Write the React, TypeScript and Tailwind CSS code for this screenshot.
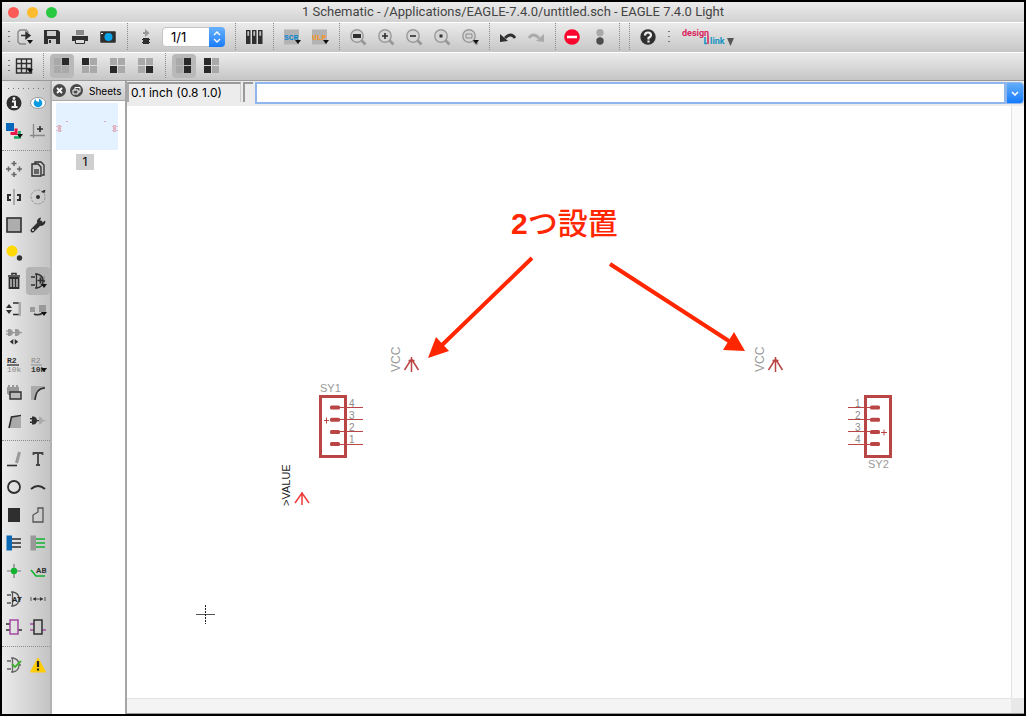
import type { ReactNode } from "react";

const D = "#2f2f2f";
const G = "#9c9c9c";
const GREEN = "#12b32f";
const WIRE = "#b94545";

function Icon({ children }: { children: ReactNode }) {
  return (
    <svg width="18" height="18" viewBox="0 0 18 18" fill="none" className="shrink-0 overflow-visible" aria-hidden="true">
      {children}
    </svg>
  );
}

const drop = <path d="M12 12h6l-3 4z" fill="#111" />;

function Tool({ label, pressed, children }: { label: string; pressed?: boolean; children: ReactNode }) {
  return (
    <button type="button" aria-label={label} aria-pressed={pressed} className="flex h-7 w-7 shrink-0 items-center justify-center">
      <span className={pressed ? "flex h-6 w-6 items-center justify-center rounded-sm bg-[#b9b9b9]" : "flex h-6 w-6 items-center justify-center"}>
        <Icon>{children}</Icon>
      </span>
    </button>
  );
}

function Sep() {
  return (
    <div className="flex w-[10px] shrink-0 justify-center self-stretch">
      <div className="border-l border-dotted border-[#8a8a8a]" />
    </div>
  );
}

function Handle() {
  return (
    <div className="flex w-2 shrink-0 flex-col items-end gap-1">
      <i className="h-px w-0.5 bg-[#777]" />
      <i className="h-px w-0.5 bg-[#777]" />
      <i className="h-px w-0.5 bg-[#777]" />
    </div>
  );
}

function Lens({ children }: { children?: ReactNode }) {
  return (
    <>
      <path d="M12.5 12.5l4 4" stroke="#999" strokeWidth="3" />
      <circle cx="8" cy="8" r="6.2" stroke="#999" strokeWidth="1.4" fill="#d6d6d6" />
      {children}
    </>
  );
}

function Layers({ dark }: { dark: number[] }) {
  const cells = [
    [1, 1],
    [9, 1],
    [1, 9],
    [9, 9],
  ];
  return (
    <>
      {cells.map(([x, y], i) => (
        <rect key={i} x={x} y={y} width="7" height="7" fill={dark.includes(i) ? "#292929" : "#a9a9a9"} />
      ))}
    </>
  );
}

const Gate = ({ color = D }: { color?: string }) => (
  <path d="M2 5h4M2 13h4M6 2h2c5 1 6 5 6 7s-1 6-6 7H6M7.5 2v14M14 9h2" stroke={color} strokeWidth="1.3" />
);

const groupA: [string, ReactNode][] = [
  ["Info", <><circle cx="9" cy="9" r="7.500" fill={D} /><path d="M7 7.500h3v5.500M6.500 13h6" stroke="#eee" strokeWidth="2" /><circle cx="9" cy="4.500" r="1.400" fill="#eee" /></>],
  ["Show", <><ellipse cx="9" cy="9" rx="7.500" ry="5.500" fill="#fff" stroke="#999" /><circle cx="9" cy="9" r="4.300" fill="#0a9be0" /><path d="M7 4.500l3 0v3.500l-3-1z" fill="#fff" /></>],
  ["Display layers", <><path d="M9 15.500h5.500V9" stroke="#12a860" strokeWidth="2.600" /><path d="M5.500 11.500h5.500V6.500" stroke="#e5174c" strokeWidth="3" /><path d="M1 1h8v8H1z" fill="#0968b9" />{drop}</>],
  ["Mark", <><path d="M4.500 2v14M1 13.500h15" stroke="#888" strokeWidth="1.300" /><path d="M11 4v6M8 7h6" stroke={D} strokeWidth="1.600" /></>],
];

const groupB: [string, ReactNode][] = [
  ["Move", <path d="M9 1v5M9 12v5M1 9h5M12 9h5M6.500 3.500h5M6.500 14.500h5M3.500 6.500v5M14.500 6.500v5" stroke="#666" strokeWidth="1.500" />],
  ["Copy", <><path d="M6 4V2h6l3 3v10h-2" stroke={D} strokeWidth="1.300" /><path d="M3 4h6l3 3v9H3z" stroke={D} strokeWidth="1.400" fill="#ccc" /><path d="M5 9h5v5H5z" fill="#666" /></>],
  ["Mirror", <><path d="M9 1v16" stroke="#777" /><path d="M2 6h4v2H4v3h2v2H2zM16 6h-4v2h2v3h-2v2h4z" fill={D} /></>],
  ["Rotate", <><circle cx="9" cy="9" r="7" stroke="#999" strokeDasharray="3 1" /><circle cx="9" cy="9" r="2" fill={D} /><path d="M12 4l3-2 1.500 0-1 3z" fill={D} /></>],
  ["Group", <rect x="2" y="2" width="14" height="14" fill="#adadad" stroke={D} strokeWidth="1.600" />],
  ["Change", <><path d="M3.500 14.500l8-8" stroke={D} strokeWidth="4" strokeLinecap="round" /><path d="M16.200 4.500A4.200 4.200 0 1 1 12 1.500l-1 3.200 2 2z" fill={D} /><circle cx="4" cy="14" r="1" fill="#eee" /></>],
  ["Paste", <><circle cx="7" cy="7" r="5.500" fill="#ffd900" /><circle cx="14.500" cy="14" r="2.700" fill="#333" /></>],
  ["", null],
  ["Delete", <><path d="M7 3V1.500h4V3M3 4h12" stroke={D} strokeWidth="1.500" /><path d="M4.500 6h9v10h-9zM7.500 7v8M10.500 7v8" stroke={D} strokeWidth="1.800" /></>],
  ["Add", <><path d="M10 4h6v9h-6z" fill="#999" /><Gate /><path d="M11.500 5.500v6M8.500 8.500h6" stroke={D} strokeWidth="1.600" />{drop}</>],
  ["Pinswap", <><path d="M8 3h6M8 14.500h6" stroke={D} strokeWidth="1.400" /><path d="M13.500 2h2.500v14h-2.500z" fill="#aaa" /><path d="M1 8l3-4 3 4zM1 10h6l-3 4z" fill={D} /></>],
  ["Replace", <><path d="M1 7h5v5H1zM10 5h7v7h-7z" fill="#999" /><path d="M5 14q4 2 9-1" stroke={D} strokeWidth="1.500" />{drop}</>],
  ["Gateswap", <><path d="M3 1h2q3 1 3 3.500T5 8H3zM10 1h2q3 1 3 3.500T12 8h-2zM1 2.500h3v1.200H1zM1 5.500h3v1.200H1zM8 4h2v1.200H8zM15 4h2v1.200h-2z" fill="#999" /><path d="M8.300 11v5.500l-3.500-2.700zM9.700 11v5.500l3.500-2.700z" fill={D} /></>],
  ["", null],
  ["Name", <><text x="2" y="7" fontSize="8" fontWeight="bold" fontFamily="Liberation Mono, monospace" fill={D}>R2</text><path d="M2 9h12" stroke={D} strokeWidth="1.300" /><text x="2" y="16" fontSize="8" fontFamily="Liberation Mono, monospace" fill="#888">10k</text></>],
  ["Value", <><text x="2" y="7" fontSize="8" fontFamily="Liberation Mono, monospace" fill="#888">R2</text><path d="M2 9h11" stroke={G} strokeWidth="1.300" /><text x="2" y="16" fontSize="8" fontWeight="bold" fontFamily="Liberation Mono, monospace" fill={D}>10k</text>{drop}</>],
  ["Smash", <><path d="M2 3h12v7H2z" fill="#999" /><path d="M4 1v10M8 1v10M12 1v4" stroke="#999" strokeWidth="2" /><path d="M5 8h11v7H5z" stroke={D} strokeWidth="1.400" fill="#bbb" /></>],
  ["Miter", <><path d="M2 2h14v2Q7 5 6 16H2z" fill="#aaa" /><path d="M16 4Q7 4 6 16" stroke={D} strokeWidth="1.600" /></>],
  ["Split", <><path d="M6 5h10v11H4z" fill="#aaa" /><path d="M4 16L6.500 5 16 3.500" stroke={D} strokeWidth="1.600" /></>],
  ["Invoke", <><path d="M3 4.500h2q3 1 3 4t-3 4H3zM1 6h3v1.500H1zM1 9.500h3V11H1zM8 8h2v1.200H8z" fill={D} /><path d="M10 4.500q4 1 4 4t-4 4zM14 8h2.500v1.200H14z" fill="#aaa" /></>],
];

const groupC: [string, ReactNode][] = [
  ["Wire", <><path d="M2 15.500h10" stroke={D} strokeWidth="1.600" /><path d="M11.500 13l3-11" stroke="#999" strokeWidth="3" /></>],
  ["Text", <path d="M4.500 5V3h9v2M9 3v12M7 15h4" stroke="#444" strokeWidth="1.800" />],
  ["Circle", <circle cx="9" cy="9" r="6" stroke={D} strokeWidth="1.800" />],
  ["Arc", <path d="M2 11q7-6 14 0" stroke={D} strokeWidth="2" />],
  ["Rectangle", <path d="M3 2h12v14H3z" fill={D} />],
  ["Polygon", <path d="M4 16V9l5-3V2h5v14z" stroke="#555" strokeWidth="1.300" />],
  ["Bus", <><path d="M1.500 1.500H7v15H1.500z" fill="#0a68b5" /><path d="M7 5h9M7 9h9M7 13h9" stroke={D} strokeWidth="1.400" /></>],
  ["Net", <><path d="M1.500 1.500H7v15H1.500z" fill="#999" /><path d="M7 5h9M7 9h9M7 13h9" stroke={GREEN} strokeWidth="1.600" /></>],
  ["Junction", <><path d="M9 2v14M2 9h14" stroke="#777" strokeWidth="1.200" /><circle cx="9" cy="9" r="3.200" fill={GREEN} /></>],
  ["Label", <><path d="M2 8l5 6h9" stroke={GREEN} strokeWidth="1.600" /><text x="7" y="11" fontSize="8" fontWeight="bold" fontFamily="Roboto, sans-serif" fill="#333">AB</text></>],
  ["Attribute", <><Gate color="#555" /><text x="7" y="12" fontSize="8" fontWeight="bold" fontFamily="Roboto, sans-serif" fill="#222">AT</text></>],
  ["Dimension", <><path d="M2 7v4M16 7v4M4 9h10" stroke="#555" /><path d="M4 9l3-2v4zM14 9l-3-2v4z" fill="#333" /></>],
  ["Module", <><path d="M1 6h4M1 12h4M13 12h4" stroke={D} strokeWidth="1.600" /><path d="M5 2h8v14H5z" stroke="#a34ba3" strokeWidth="1.500" /></>],
  ["Port", <><path d="M1 6h4M1 12h4M13 12h4" stroke="#a34ba3" strokeWidth="1.600" /><path d="M5 2h8v14H5z" stroke={D} strokeWidth="1.500" /></>],
];

const groupD: [string, ReactNode][] = [
  ["ERC", <><Gate color="#666" /><path d="M7 8l3 3 6-6" stroke="#3fb32b" strokeWidth="1.800" /></>],
  ["Errors", <><path d="M9 2l7.500 14h-15z" fill="#ffcc05" stroke="#ffcc05" strokeLinejoin="round" /><path d="M9 5v6M9 12.500v2" stroke="#222" strokeWidth="2.200" /></>],
];

function Rail({ items, active }: { items: [string, ReactNode][]; active?: string }) {
  return (
    <div className="grid grid-cols-2">
      {items.map(([label, art], i) =>
        label ? (
          <button
            key={i}
            type="button"
            aria-label={label}
            className={label === active ? "flex h-7 items-center justify-center rounded-sm bg-[#b4b4b4]" : "flex h-7 items-center justify-center"}
          >
            <Icon>{art}</Icon>
          </button>
        ) : (
          <span key={i} className="h-7" />
        ),
      )}
    </div>
  );
}

function RailSep() {
  return (
    <div className="flex h-[10px] items-center">
      <div className="w-full border-t border-dotted border-[#8a8a8a]" />
    </div>
  );
}

function Connector({ x, flip, name, pins }: { x: number; flip?: boolean; name: string; pins: string[] }) {
  return (
    <g>
      <rect x={x + 1.5} y="396.500" width="25" height="60" fill="none" stroke={WIRE} strokeWidth="3" />
      {pins.map((p, i) => {
        const y = 407.5 + i * 12.2;
        return (
          <g key={p}>
            <path d={flip ? `M${x - 16} ${Math.floor(y)}.500h26` : `M${x + 18} ${Math.floor(y)}.500h26`} stroke={WIRE} />
            <rect x={flip ? x + 6 : x + 11} y={y - 2} width="10" height="4" rx="1.500" fill={WIRE} />
            <text x={flip ? x - 9 : x + 30} y={y - 1} fontSize="10" fill="#8c8c8c">{p}</text>
          </g>
        );
      })}
      <path d={flip ? `M${x + 17} 432.500h6m-3 -3v6` : `M${x + 5} 420.500h5m-2.500 -3v6`} stroke={WIRE} />
      <text x={flip ? x + 4 : x + 1} y={flip ? 468 : 392} fontSize="11" fill="#999">{name}</text>
    </g>
  );
}

function Supply({ x }: { x: number }) {
  return (
    <g>
      <text transform={`translate(${x - 12} 372) rotate(-90)`} fontSize="12" fill="#999">VCC</text>
      <path d={`M${x - 7} 370L${x} 359L${x + 7} 370M${x} 357v15M${x - 3} 360.500h6`} fill="none" stroke={WIRE} strokeWidth="1.500" />
    </g>
  );
}

function Schematic() {
  return (
    <svg className="h-full w-full" fontFamily="Liberation Sans, sans-serif" role="img" aria-label="Schematic">
      <g transform="translate(-127 -106)">
        <Supply x={411.5} />
        <Supply x={775.5} />
        <Connector x={319} name="SY1" pins={["4", "3", "2", "1"]} />
        <Connector x={864} flip name="SY2" pins={["1", "2", "3", "4"]} />
        <text transform="translate(290 506) rotate(-90)" fontSize="11" fill="#222">&gt;VALUE</text>
        <path d="M295 503L302 493L309 503M302 492v13" fill="none" stroke="#ee3b3b" strokeWidth="1.500" />
        <path d="M196 614.500h19" stroke="#555" />
        <path d="M205.500 605v19" stroke="#222" strokeDasharray="2 1" />
        <text x="511" y="234" fontSize="30" fill="#ff2600" fontWeight="bold">
          2<tspan fontFamily="Noto Sans CJK JP, sans-serif" fontWeight="500">つ設置</tspan>
        </text>
        <path d="M532 258L440 347M610 264L732 343" stroke="#ff2600" strokeWidth="4" />
        <path d="M428 358L436 337L449 351zM745 351L734 332L723 350z" fill="#ff2600" />
      </g>
    </svg>
  );
}

const bar = "flex shrink-0 items-center border-t border-white bg-linear-to-b from-[#ebebeb] to-[#c6c6c6] pb-0.5";

export default function App() {
  return (
    <div className="flex h-screen flex-col border-2 border-black bg-white font-[Inter,'Liberation_Sans',sans-serif] text-black">
      <header className="flex h-5 shrink-0 items-center bg-linear-to-b from-[#ececec] to-[#d2d2d2] px-1.5">
        <div className="flex flex-1 gap-2">
          <button type="button" aria-label="Close" className="size-[11px] rounded-full bg-[#fc5b57]" />
          <button type="button" aria-label="Minimize" className="size-[11px] rounded-full bg-[#fdbc2e]" />
          <button type="button" aria-label="Zoom window" className="size-[11px] rounded-full bg-[#28c840]" />
        </div>
        <h1 className="font-[Roboto,sans-serif] text-[13px] leading-5 text-[#444]">1 Schematic - /Applications/EAGLE-7.4.0/untitled.sch - EAGLE 7.4.0 Light</h1>
        <div className="flex-1" />
      </header>

      <div className={`${bar} h-[30px]`} role="toolbar" aria-label="Actions">
        <Handle />
        <Tool label="Open"><path d="M13 5V4l-2-2H5L3 4v10l2 2h6" stroke="#888" strokeWidth="1.400" /><path d="M6 7.500h6M11 4.500l4 3-4 3z" stroke={D} strokeWidth="1.400" fill={D} />{drop}</Tool>
        <Tool label="Save"><path d="M1 2h14l2 2v12H1z" fill={D} /><path d="M4 3h9v5H4zM5 11h8v5H5z" fill="#ccc" /><path d="M6 12h2v3H6z" fill={D} /></Tool>
        <Tool label="Print"><path d="M5 2h8v5H5z" fill="#888" /><path d="M1 8h16v5H1z" fill={D} /><path d="M4.500 11.500h9v4h-9z" fill="#ddd" stroke={D} /></Tool>
        <Tool label="Export image"><path d="M2 4h14v10H2z" fill={D} stroke={D} strokeWidth="1.500" strokeLinejoin="round" /><circle cx="9.500" cy="9" r="4" fill="#0aa5e8" /><path d="M2 5h2v1H2z" fill="#fff" /></Tool>
        <Sep />
        <Tool label="Switch to board"><path d="M8 1v3H6v2h2v3l4.500-4z" fill="#999" /><path d="M6 10h6v6H6z" fill={D} /><path d="M5 11.500h8M5 14.500h8" stroke={D} /></Tool>
        <div className="relative mr-[5px] ml-0.5 h-5 w-[63px] shrink-0">
          <select aria-label="Sheet" defaultValue="1/1" className="block h-5 w-full appearance-none rounded-sm border border-[#c4c4c4] bg-white pl-2 text-[13px] leading-4">
            <option>1/1</option>
          </select>
          <span className="pointer-events-none absolute inset-y-0 right-0 flex w-4 items-center justify-center rounded-r-sm bg-linear-to-b from-[#68b2fb] to-[#147bfb]">
            <svg width="8" height="12" viewBox="0 0 8 12" fill="none" stroke="#fff" strokeWidth="1.300"><path d="M1 4l3-3 3 3M1 8l3 3 3-3" /></svg>
          </span>
        </div>
        <Sep />
        <Tool label="Use library"><path d="M1 2h4.500v14H1zM7 2h4.500v14H7zM13 2h4.500v14H13z" fill={D} /><path d="M2.700 3.500h1v4h-1zM8.700 3.500h1v4h-1zM14.700 3.500h1v4h-1z" fill="#ddd" stroke="#ddd" strokeWidth=".5" /></Tool>
        <Sep />
        <Tool label="Run script"><path d="M1 1.500h15v15H1z" fill="#b3b3b3" /><text x="1" y="12" fontSize="8" fontWeight="bold" fontFamily="Liberation Mono, monospace" fill="#0a87cf">SCR</text>{drop}</Tool>
        <Tool label="Run ULP"><path d="M1 1.500h15v15H1z" fill="#b3b3b3" /><text x="1" y="12" fontSize="8" fontWeight="bold" fontFamily="Liberation Mono, monospace" fill="#f7941d">ULP</text>{drop}</Tool>
        <Sep />
        <Tool label="Zoom to fit"><Lens><path d="M4 6h8v4H4z" fill={D} /></Lens></Tool>
        <Tool label="Zoom in"><Lens><path d="M8 5v6M5 8h6" stroke={D} strokeWidth="1.600" /></Lens></Tool>
        <Tool label="Zoom out"><Lens><path d="M5 8h6" stroke={D} strokeWidth="1.600" /></Lens></Tool>
        <Tool label="Redraw"><Lens><path d="M6.500 6.500h3v3h-3z" fill={D} /></Lens></Tool>
        <Tool label="Zoom select"><Lens><path d="M5 6h6v4H5z" stroke="#888" /></Lens>{drop}</Tool>
        <Sep />
        <Tool label="Undo"><path d="M16 10q-4-6-10 0" stroke={D} strokeWidth="2.800" /><path d="M1 6v8l8-1z" fill={D} /></Tool>
        <Tool label="Redo"><path d="M2 10q4-6 10 0" stroke="#aaa" strokeWidth="2.800" /><path d="M17 6v8l-8-1z" fill="#aaa" /></Tool>
        <Sep />
        <div className="-ml-0.5 flex">
          <Tool label="Stop"><circle cx="9" cy="9" r="7.800" fill="#f9062f" /><path d="M4 9h10" stroke="#fff" strokeWidth="2.500" /></Tool>
          <Tool label="Go"><circle cx="9" cy="4.800" r="3.700" fill="#aaa" /><circle cx="9" cy="13" r="3.700" fill="#4c4c4c" /></Tool>
        </div>
        <Sep />
        <Sep />
        <Tool label="Help"><circle cx="9" cy="9" r="7.700" fill={D} /><path d="M6 7.500Q6 4.500 9 4.500T12 7.200Q12 8.500 9.500 10v1.500M9.500 12.500v2" stroke="#eee" strokeWidth="2.200" /></Tool>
        <Handle />
        <button type="button" aria-label="Design link" className="ml-3 flex items-center">
          <svg width="52" height="20" viewBox="0 0 52 20" fontFamily="Roboto, sans-serif" fontWeight="bold" aria-hidden="true">
            <text x="0" y="9" fontSize="9" fill="#d9235b">design</text>
            <path d="M23 10v6.500h2" stroke="#1694c1" strokeWidth="1.500" fill="none" />
            <text x="28" y="17" fontSize="9" fill="#1694c1">link</text>
            <path d="M26 9v8" stroke="#d9235b" strokeWidth="1.500" />
            <path d="M45 11h7l-3.500 8z" fill="#555" />
          </svg>
        </button>
      </div>

      <div className={`${bar} h-7`} role="toolbar" aria-label="Parameters">
        <Handle />
        <Tool label="Grid"><path d="M1.500 2h15v14h-15zM1.500 6.500h15M1.500 11.500h15M6.500 2v14M11.500 2v14" stroke={D} strokeWidth="1.400" />{drop}</Tool>
        <Sep />
        <Tool label="Layer preset 1" pressed><Layers dark={[1]} /></Tool>
        <Tool label="Layer preset 2"><Layers dark={[0]} /></Tool>
        <Tool label="Layer preset 3"><Layers dark={[2]} /></Tool>
        <Tool label="Layer preset 4"><Layers dark={[3]} /></Tool>
        <Sep />
        <Tool label="Align right" pressed><Layers dark={[1, 3]} /></Tool>
        <Tool label="Align left"><Layers dark={[0, 2]} /></Tool>
      </div>

      <div className="flex min-h-0 flex-1 border-t border-[#999]">
        <nav aria-label="Tools" className="w-[50px] shrink-0 border-r-2 border-[#b2b2b2] bg-linear-to-r from-[#ebebeb] to-[#c4c4c4]">
          <div className="flex h-2 items-end justify-center gap-1">
            {[0, 1, 2, 3, 4, 5, 6, 7].map((n) => (
              <i key={n} className="size-px bg-[#777]" />
            ))}
          </div>
          <Rail items={groupA} />
          <RailSep />
          <Rail items={groupB} active="Add" />
          <RailSep />
          <Rail items={groupC} />
          <RailSep />
          <Rail items={groupD} />
        </nav>

        <aside className="flex w-[75px] shrink-0 flex-col border-r-2 border-[#a5a5a5] bg-white">
          <div className="flex h-5 shrink-0 items-center gap-1 border-b border-[#aaa] bg-linear-to-b from-[#e6e6e6] to-[#cbcbcb] pl-px">
            <button type="button" aria-label="Close sheets">
              <svg width="13" height="13" viewBox="0 0 13 13" className="block"><circle cx="6.500" cy="6.500" r="6.500" fill="#4a4a4a" /><path d="M4 4l5 5M9 4l-5 5" stroke="#fff" strokeWidth="1.800" /></svg>
            </button>
            <button type="button" aria-label="Detach sheets">
              <svg width="13" height="13" viewBox="0 0 13 13" fill="none" className="block"><circle cx="6.500" cy="6.500" r="6.500" fill="#4a4a4a" /><path d="M3 6h5v4H3zM5 6V3.500h5V8H8" stroke="#fff" /></svg>
            </button>
            <h2 className="pl-0.5 text-[10px] leading-4">Sheets</h2>
          </div>
          <button type="button" className="mx-1 mt-0.5 flex flex-col items-start gap-1">
            <svg width="62" height="47" viewBox="0 0 62 47" className="block bg-[#e4f1ff]" fill="none" aria-hidden="true">
              <path d="M2 22h3v7H2zM57 22h3v7h-3z" fill="#dcb4c4" />
              <path d="M0 23.500h6M0 27.500h6M56 23.500h6M56 27.500h6" stroke="#e2bccb" />
              <path d="M10 18.500h2M48 18.500h2" stroke="#d9a9b8" />
            </svg>
            <span className="ml-5 w-[18px] bg-[#cfcfcf] text-xs leading-4">1</span>
          </button>
        </aside>

        <main className="flex min-w-0 flex-1 flex-col">
          <div className="flex h-[25px] shrink-0 items-start bg-[#ececec] pt-px">
            <output className="h-5 w-[114px] border-t-2 border-r border-l-2 border-t-[#999] border-r-[#ccc] border-l-[#aaa] pl-0.5 text-xs leading-[18px]">0.1 inch (0.8 1.0)</output>
            <span className="ml-0.5 h-5 w-2.5 border-t-2 border-l-2 border-[#999]" />
            <div className="ml-0.5 flex h-[22px] min-w-0 flex-1">
              <input aria-label="Command line" className="min-w-0 flex-1 border-2 border-[#8fb6ec] bg-white px-1 text-xs outline-none" />
              <button type="button" aria-label="Command history" className="flex w-[18px] items-center justify-center rounded-r border border-[#8fb6ec] bg-linear-to-b from-[#62aefb] to-[#0f7bfc]">
                <svg width="8" height="5" viewBox="0 0 8 5" fill="none" stroke="#fff" strokeWidth="1.500" aria-hidden="true"><path d="M1 1l3 3 3-3" /></svg>
              </button>
            </div>
          </div>
          <div className="grid min-h-0 flex-1 grid-cols-[1fr_13px] grid-rows-[1fr_15px] border-b border-[#999]">
            <Schematic />
            <div className="border-l border-[#e3e3e3] bg-[#fafafa]" />
            <div className="border-t border-[#e3e3e3] bg-[#f4f4f4]" />
            <div className="bg-[#e8e8e8]" />
          </div>
        </main>
      </div>
    </div>
  );
}
